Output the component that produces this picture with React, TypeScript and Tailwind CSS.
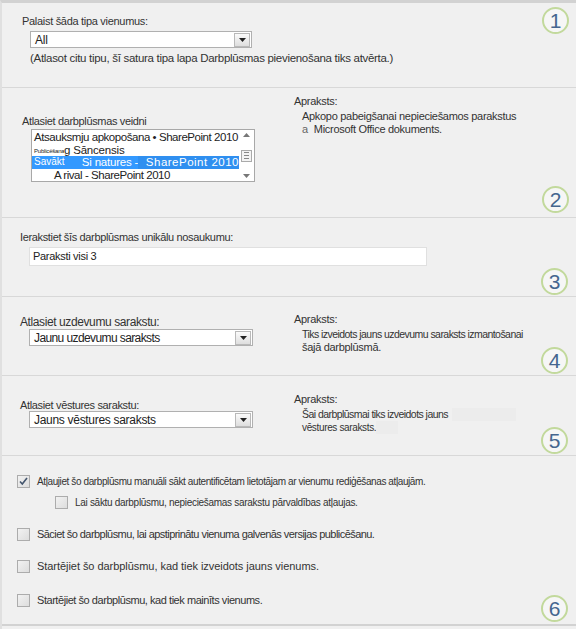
import React from "react";

const font = "font-['Liberation_Sans',Arial,sans-serif]";

function Badge(props: { n: number; pos: string }) {
  return (
    <div
      className={`absolute ${props.pos} flex h-[27px] w-[27px] items-center justify-center rounded-full border-2 border-[#c2d99c] bg-[#f6f6f6] text-[21px] leading-none text-[#45668f]`}
    >
      {props.n}
    </div>
  );
}

function Arrow() {
  return (
    <div className="flex h-[14px] w-[16px] items-center justify-center border border-[#b9b9b9] bg-gradient-to-b from-[#fbfbfb] to-[#dedede]">
      <svg width="7" height="4" viewBox="0 0 7 4">
        <path d="M0 0h7L3.5 4z" fill="#222" />
      </svg>
    </div>
  );
}

function Select(props: { value: string; w: string; track: string }) {
  return (
    <div
      className={`flex h-[17px] ${props.w} items-center justify-between border border-[#b0b0b0] bg-white pl-[4px] pr-[1px] text-[12px] text-[#222]`}
    >
      <span className={props.track}>{props.value}</span>
      <Arrow />
    </div>
  );
}

function Check(props: { checked?: boolean }) {
  return (
    <div className="flex h-[13px] w-[13px] shrink-0 items-center justify-center border border-[#acacac] bg-gradient-to-br from-[#f2f2f2] to-[#dddddd]">
      {props.checked ? (
        <svg width="9" height="9" viewBox="0 0 9 9">
          <path d="M1 4.5l2.3 2.6L8 1" stroke="#44566e" strokeWidth="1.6" fill="none" />
        </svg>
      ) : null}
    </div>
  );
}

function Desc(props: { lines: React.ReactNode[] }) {
  return (
    <div className="text-[11px] leading-[13px] tracking-[-0.3px] text-[#333]">
      <div>Apraksts:</div>
      <div className="pl-[8px] pt-[2px]">
        {props.lines.map((l, i) => (
          <div key={i} className="whitespace-nowrap">
            {l}
          </div>
        ))}
      </div>
    </div>
  );
}

function CheckRow(props: { checked?: boolean; text: string; indent?: boolean; tc: string }) {
  return (
    <div className={`flex h-[13px] items-center gap-[7px] ${props.indent ? "pl-[38px]" : ""}`}>
      <Check checked={props.checked} />
      <span className={`whitespace-nowrap leading-[13px] text-[#333] ${props.tc}`}>{props.text}</span>
    </div>
  );
}

export default function App() {
  return (
    <div className={`${font} h-[629px] w-[576px] overflow-hidden bg-[#f0f0f0] text-[#333]`}>
      <div className="h-[629px] border-l-2 border-t-[3px] border-l-[#e0e0e0] border-t-[#d2d2d2]">
        {/* 1 */}
        <section className="relative h-[85px] border-b border-[#d8d8d8] pl-[20px] pt-[12px]">
          <div className="text-[11px] leading-[13px] tracking-[-0.3px]">Palaist šāda tipa vienumus:</div>
          <div className="ml-[8px] mt-[3px]">
            <Select value="All" w="w-[222px]" track="tracking-[-0.2px]" />
          </div>
          <div className="ml-[8px] mt-[4px] text-[11.5px] leading-[13px] tracking-[-0.3px]">
            (Atlasot citu tipu, šī satura tipa lapa Darbplūsmas pievienošana tiks atvērta.)
          </div>
          <Badge n={1} pos="right-[7px] top-[4px]" />
        </section>

        {/* 2 */}
        <section className="relative flex h-[130px] border-b border-[#d8d8d8] pl-[20px]">
          <div className="w-[272px] pt-[27px]">
            <div className="text-[11px] leading-[13px] tracking-[-0.35px]">Atlasiet darbplūsmas veidni</div>
            <div className="relative ml-[9px] mt-[1px] flex h-[53px] w-[224px] border border-[#a8a8a8] bg-white text-[11.5px] leading-[12.5px] text-[#222]">
              <div className="flex-1 overflow-hidden">
                <div className="whitespace-nowrap pl-[2px] pt-[1px] tracking-[-0.45px]">Atsauksmju apkopošana • SharePoint 2010</div>
                <div className="flex items-end whitespace-nowrap pl-[2px]">
                  <span className="w-[30px] overflow-hidden text-[6px] leading-[10px] tracking-[-0.2px]">Publicēšana</span>
                  <span className="tracking-[-0.2px]">g Sāncensis</span>
                </div>
                <div className="flex whitespace-nowrap bg-[#3399ff] text-white">
                  <span className="w-[50px] pl-[2px] text-[10px]">Savākt</span>
                  <span className="w-[56px] tracking-[-0.2px]">Si natures -</span>
                  <span className="bg-[#2f8ff0] pl-[8px] tracking-[0.5px]">SharePoint 2010</span>
                </div>
                <div className="whitespace-nowrap pl-[22px] tracking-[-0.45px]">A rival - SharePoint 2010</div>
              </div>
              <div className="flex w-[15px] flex-col items-center justify-between py-[3px] text-[#666]">
                <svg width="7" height="4" viewBox="0 0 7 4">
                  <path d="M0 4h7L3.5 0z" fill="#777" />
                </svg>
                <div className="flex h-[12px] w-[11px] flex-col justify-center gap-[2px] border border-[#aaa] bg-[#f4f4f4] px-[2px]">
                  <div className="h-px bg-[#888]" />
                  <div className="h-px bg-[#888]" />
                  <div className="h-px bg-[#888]" />
                </div>
                <svg width="7" height="4" viewBox="0 0 7 4">
                  <path d="M0 0h7L3.5 4z" fill="#777" />
                </svg>
              </div>
            </div>
          </div>
          <div className="pt-[7px]">
            <Desc
              lines={[
                "Apkopo pabeigšanai nepieciešamos parakstus",
                <span>
                  <span className="pr-[6px] text-[#666]">a</span>Microsoft Office dokuments.
                </span>,
              ]}
            />
          </div>
          <Badge n={2} pos="right-[7px] bottom-[4px]" />
        </section>

        {/* 3 */}
        <section className="relative h-[79px] border-b border-[#d8d8d8] pl-[18px] pt-[13px]">
          <div className="text-[11px] leading-[13px] tracking-[-0.35px]">Ierakstiet šīs darbplūsmas unikālu nosaukumu:</div>
          <div className="ml-[9px] mt-[3px] flex h-[19px] w-[398px] items-center border border-[#e0e0e0] bg-white pl-[3px] text-[11px] tracking-[-0.3px] text-[#222]">
            Paraksti visi 3
          </div>
          <Badge n={3} pos="right-[8px] bottom-[1px]" />
        </section>

        {/* 4 */}
        <section className="relative flex h-[79px] border-b border-[#d8d8d8] pl-[18px]">
          <div className="w-[274px] pt-[19px]">
            <div className="text-[12px] leading-[13px] tracking-[-0.4px]">Atlasiet uzdevumu sarakstu:</div>
            <div className="ml-[9px]">
              <Select value="Jaunu uzdevumu saraksts" w="w-[224px]" track="tracking-[-0.6px]" />
            </div>
          </div>
          <div className="pt-[16px]">
            <Desc
              lines={[
                <span className="text-[10.5px] tracking-[-0.55px]">Tiks izveidots jauns uzdevumu saraksts izmantošanai</span>,
                "šajā darbplūsmā.",
              ]}
            />
          </div>
          <Badge n={4} pos="right-[8px] bottom-[1px]" />
        </section>

        {/* 5 */}
        <section className="relative flex h-[80px] border-b border-[#d8d8d8] pl-[18px]">
          <div className="w-[274px] pt-[23px]">
            <div className="text-[11px] leading-[12px] tracking-[-0.35px]">Atlasiet vēstures sarakstu:</div>
            <div className="ml-[9px]">
              <Select value="Jauns vēstures saraksts" w="w-[224px]" track="tracking-[-0.3px]" />
            </div>
          </div>
          <div className="pt-[17px]">
            <Desc
              lines={[
                <span className="flex">
                  <span className="text-[10.5px] tracking-[-0.55px]">Šai darbplūsmai tiks izveidots jauns</span>
                  <span className="ml-[4px] w-[64px] bg-[#ececec]" />
                </span>,
                <span className="flex">
                  <span className="text-[10px] tracking-[-0.35px]">vēstures saraksts.</span>
                  <span className="w-[22px] bg-[#ececec]" />
                </span>,
              ]}
            />
          </div>
          <Badge n={5} pos="right-[8px] bottom-[1px]" />
        </section>

        {/* 6 */}
        <section className="relative flex h-[170px] flex-col border-b-2 border-[#d2d2d2] pl-[15px] pt-[19px]">
          <CheckRow
            checked
            tc="text-[10px] tracking-[-0.4px]"
            text="Atļaujiet šo darbplūsmu manuāli sākt autentificētam lietotājam ar vienumu rediģēšanas atļaujām."
          />
          <div className="mt-[8px]">
            <CheckRow
              indent
              tc="text-[10px] tracking-[-0.3px]"
              text="Lai sāktu darbplūsmu, nepieciešamas sarakstu pārvaldības atļaujas."
            />
          </div>
          <div className="mt-[19px]">
            <CheckRow
              tc="text-[11px] tracking-[-0.55px]"
              text="Sāciet šo darbplūsmu, lai apstiprinātu vienuma galvenās versijas publicēšanu."
            />
          </div>
          <div className="mt-[19px]">
            <CheckRow tc="text-[11px] tracking-[-0.05px]" text="Startējiet šo darbplūsmu, kad tiek izveidots jauns vienums." />
          </div>
          <div className="mt-[21px]">
            <CheckRow tc="text-[11px] tracking-[-0.45px]" text="Startējiet šo darbplūsmu, kad tiek mainīts vienums." />
          </div>
          <Badge n={6} pos="right-[8px] bottom-[2px]" />
        </section>
      </div>
    </div>
  );
}
